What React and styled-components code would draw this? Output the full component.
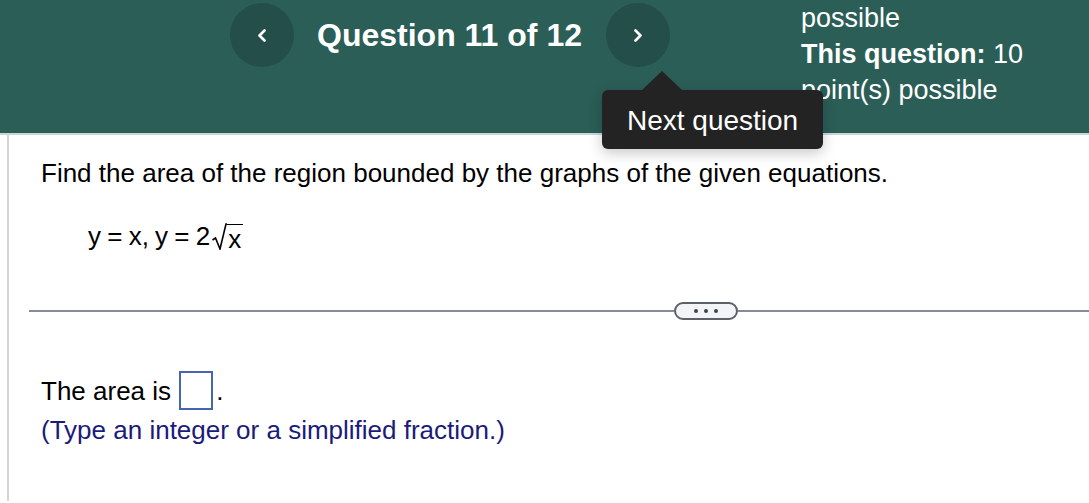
import styled, { createGlobalStyle } from "styled-components"

const GlobalStyle = createGlobalStyle`
    html, body {
        margin: 0;
        padding: 0;
        background: #ffffff;
        font-family: "Liberation Sans", Arial, Helvetica, sans-serif;
    }
`;

function Chevron({ dir }) {
    const d = dir === "left" ? "M7.5 1.5 L2.5 6.5 L7.5 11.5" : "M2.5 1.5 L7.5 6.5 L2.5 11.5"
    return (
        <svg width="10" height="13" viewBox="0 0 10 13">
            <path d={d} fill="none" stroke="#ffffff" strokeWidth="2.6" strokeLinecap="round" strokeLinejoin="round" />
        </svg>
    )
}

function RootSign() {
    return (
        <svg width="15" height="27" viewBox="0 0 15 27">
            <path d="M0.5 17 L3.5 15 L8 26 L14 1 L15 1" fill="none" stroke="#000000" strokeWidth="1.6" strokeLinejoin="miter" />
        </svg>
    )
}

function App() {
    return (
        <Page>
            <GlobalStyle />
            <Header>
                <NavButton aria-label="Previous question">
                    <Chevron dir="left" />
                </NavButton>
                <Title>Question 11 of 12</Title>
                <NavWrap>
                    <NavButton aria-label="Next question">
                        <Chevron dir="right" />
                    </NavButton>
                    <Tooltip>Next question</Tooltip>
                </NavWrap>
                <Points>
                    <div>possible</div>
                    <div><b>This question:</b> 10</div>
                    <div>point(s) possible</div>
                </Points>
            </Header>
            <Body>
                <Question>
                    <Prompt>Find the area of the region bounded by the graphs of the given equations.</Prompt>
                    <Equation>
                        y = x, y = 2<Root><RootSign /><Radicand>x</Radicand></Root>
                    </Equation>
                </Question>
                <Divider>
                    <LineLeft />
                    <Pill>
                        <Dot /><Dot /><Dot />
                    </Pill>
                    <LineRight />
                </Divider>
                <Question>
                    <AnswerRow>
                        The area is <AnswerBox />.
                    </AnswerRow>
                    <Hint>(Type an integer or a simplified fraction.)</Hint>
                </Question>
            </Body>
        </Page>
    )
}

export default App


const Page = styled.div`
    width: 1089px;
    height: 503px;
    overflow: hidden;
    background: #ffffff;
`;

const Header = styled.header`
    height: 135px;
    box-sizing: border-box;
    background: #2b5e57;
    border-bottom: 2px solid #c7d8db;
    display: flex;
    align-items: flex-start;
    padding-left: 230px;
    color: #ffffff;
    position: relative;
    z-index: 2;
`;

const NavButton = styled.button`
    width: 64px;
    height: 64px;
    margin-top: 3px;
    border-radius: 50%;
    border: none;
    padding: 0;
    background: #244e49;
    display: flex;
    align-items: center;
    justify-content: center;
    cursor: pointer;
`;

const NavWrap = styled.div`
    position: relative;
`;

const Title = styled.h1`
    margin: 17px 24px 0 23px;
    font-size: 32px;
    line-height: 36px;
    font-weight: bold;
`;

const Tooltip = styled.div`
    position: absolute;
    left: -4px;
    top: 90px;
    width: 221px;
    height: 59px;
    box-sizing: border-box;
    padding-left: 25px;
    background: #232323;
    border-radius: 6px;
    color: #ffffff;
    font-size: 28px;
    line-height: 62px;
    white-space: nowrap;
    box-shadow: 0 4px 14px rgba(0, 0, 0, 0.22);

    &::before {
        content: '';
        position: absolute;
        left: 40px;
        top: -19px;
        border-left: 20px solid transparent;
        border-right: 20px solid transparent;
        border-bottom: 19px solid #232323;
    }
`;

const Points = styled.div`
    margin-left: 131px;
    font-size: 27px;
    line-height: 36px;
`;

const Body = styled.main`
    margin-left: 7px;
    border-left: 2px solid #d1d4d9;
    padding-left: 20px;
    height: 366px;
    color: #000000;
`;

const Question = styled.section`
    padding-left: 12px;
`;

const Prompt = styled.p`
    margin: 0;
    padding-top: 23px;
    font-size: 26px;
    line-height: 30px;
`;

const Equation = styled.div`
    margin-top: 33px;
    padding-left: 47px;
    font-size: 26px;
    line-height: 30px;
    word-spacing: -1px;
    display: flex;
    align-items: flex-end;
    white-space: pre;
`;

const Root = styled.span`
    display: inline-flex;
    align-items: flex-start;
    margin-left: 2px;
    height: 30px;
    padding-top: 2px;
    box-sizing: border-box;
`;

const Radicand = styled.span`
    border-top: 1.6px solid #000000;
    padding: 1px 2px 0 1px;
    line-height: 27px;
    margin-top: 0.5px;
`;

const Divider = styled.div`
    display: flex;
    align-items: center;
    margin-top: 51px;
    height: 18px;
`;

const LineLeft = styled.div`
    width: 645px;
    height: 2px;
    background: #878b93;
`;

const LineRight = styled.div`
    flex: 1;
    height: 2px;
    background: #878b93;
`;

const Pill = styled.div`
    width: 64px;
    height: 18px;
    box-sizing: border-box;
    border: 2px solid #5c6068;
    border-radius: 9px;
    background: #f2f4f7;
    display: flex;
    align-items: center;
    justify-content: center;
    gap: 6px;
`;

const Dot = styled.span`
    width: 4px;
    height: 4px;
    border-radius: 50%;
    background: #40444c;
`;

const AnswerRow = styled.div`
    margin-top: 51px;
    height: 39px;
    display: flex;
    align-items: center;
    font-size: 26px;
    line-height: 30px;
    white-space: pre;
`;

const AnswerBox = styled.span`
    display: inline-block;
    width: 34px;
    height: 39px;
    box-sizing: border-box;
    border: 2px solid #4466b0;
    margin-left: 1px;
    margin-right: 3px;
`;

const Hint = styled.div`
    margin-top: 5px;
    font-size: 26px;
    line-height: 30px;
    color: #1b1b7a;
`;
